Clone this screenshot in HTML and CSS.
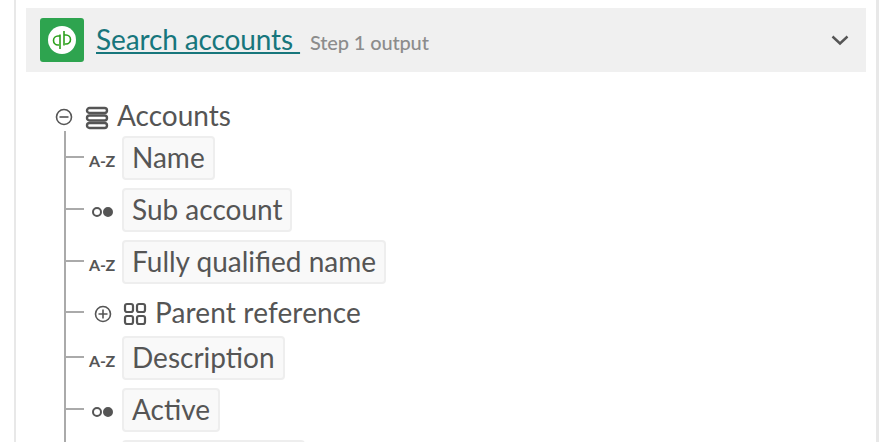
FILE: index.html
```html
<!DOCTYPE html>
<html lang="en">

<head>
    <meta charset="UTF-8">
    <meta name="viewport" content="width=device-width, initial-scale=1.0">
    <title>Search accounts</title>
    <link rel="stylesheet" href="styles.css">
</head>

<body>
    <div class="panel">
        <div class="step-header">
            <div class="app-icon">
                <svg width="30" height="30" viewBox="0 0 30 30">
                    <circle cx="15" cy="15" r="14" fill="#fff" />
                    <path d="M13 9.5V24M13 11H11a4.5 4.5 0 0 0 0 9h1M17 6v14.5M17 10h2a4.5 4.5 0 0 1 0 9h-1" fill="none" stroke="#2ca01c" stroke-width="1.6" />
                </svg>
            </div>
            <a class="step-title" href="#">Search accounts&nbsp;</a>
            <span class="step-sub">Step 1 output</span>
            <svg class="chevron" width="18" height="12" viewBox="0 0 18 12">
                <path d="M1.5 2.5L9 9.5L16.5 2.5" fill="none" stroke="#555" stroke-width="2.4" />
            </svg>
        </div>

        <div class="tree-root">
            <svg class="toggle" width="18" height="18" viewBox="0 0 18 18">
                <circle cx="9" cy="9" r="7.5" fill="none" stroke="#555" stroke-width="1.6" />
                <path d="M4.5 9h9" stroke="#555" stroke-width="1.6" />
            </svg>
            <svg class="list-icon" width="24" height="24" viewBox="0 0 24 24">
                <g fill="none" stroke="#555" stroke-width="2.4">
                    <rect x="2" y="2" width="20" height="5" rx="2.5" />
                    <rect x="2" y="9.5" width="20" height="5" rx="2.5" />
                    <rect x="2" y="17" width="20" height="5" rx="2.5" />
                </g>
            </svg>
            <span class="root-label">Accounts</span>
        </div>

        <ul class="tree">
            <li>
                <span class="type-az">A-Z</span>
                <span class="chip">Name</span>
            </li>
            <li>
                <span class="type-bool"><i class="dot-open"></i><i class="dot-full"></i></span>
                <span class="chip">Sub account</span>
            </li>
            <li>
                <span class="type-az">A-Z</span>
                <span class="chip">Fully qualified name</span>
            </li>
            <li class="group">
                <svg class="toggle-small" width="18" height="18" viewBox="0 0 18 18">
                    <circle cx="9" cy="9" r="7.5" fill="none" stroke="#555" stroke-width="1.6" />
                    <path d="M4.5 9h9M9 4.5v9" stroke="#555" stroke-width="1.6" />
                </svg>
                <svg class="grid-icon" width="24" height="24" viewBox="0 0 24 24">
                    <g fill="none" stroke="#555" stroke-width="2.2">
                        <rect x="2" y="2" width="8" height="8" rx="2" />
                        <rect x="14" y="2" width="8" height="8" rx="2" />
                        <rect x="2" y="14" width="8" height="8" rx="2" />
                        <rect x="14" y="14" width="8" height="8" rx="2" />
                    </g>
                </svg>
                <span class="group-label">Parent reference</span>
            </li>
            <li>
                <span class="type-az">A-Z</span>
                <span class="chip">Description</span>
            </li>
            <li>
                <span class="type-bool"><i class="dot-open"></i><i class="dot-full"></i></span>
                <span class="chip">Active</span>
            </li>
            <li>
                <span class="type-az"></span>
                <span class="chip chip-next"></span>
            </li>
        </ul>
    </div>
</body>

</html>
```

FILE: styles.css
```css
html,
body {
    height: 100%;
    margin: 0;
    overflow: hidden;
}

body {
    font-family: Lato, "Open Sans", sans-serif;
    background-color: #fff;
    color: #555;
}

.panel {
    box-sizing: border-box;
    width: 865px;
    height: 100%;
    margin-left: 14px;
    padding: 8px 10px 0;
    overflow: hidden;
    border-left: 2px solid #e8e8e8;
    border-right: 3px solid #e8e8e8;
}

.step-header {
    display: flex;
    align-items: center;
    height: 64px;
    padding: 0 14px;
    background-color: #f0f0f0;
}

.app-icon {
    display: flex;
    align-items: center;
    justify-content: center;
    width: 44px;
    height: 44px;
    margin-right: 12px;
    background-color: #2ea44f;
    border-radius: 3px;
}

.step-title {
    margin-top: -2px;
    color: #17767c;
    font-size: 28px;
    letter-spacing: -0.12px;
}

.step-sub {
    margin-left: 10px;
    margin-top: 4px;
    color: #8c8c8c;
    font-size: 20px;
    font-weight: 500;
    letter-spacing: -0.15px;
}

.chevron {
    margin-left: auto;
    margin-right: 3px;
}

.tree-root {
    display: flex;
    align-items: center;
    height: 44px;
    margin-top: 20px;
    margin-left: 29px;
    font-size: 28px;
}

.toggle {
    margin-top: 6px;
    margin-right: 12px;
}

.list-icon {
    margin-top: 8px;
    margin-right: 8px;
}

.root-label {
    margin-top: 2px;
}

.tree {
    list-style: none;
    margin: -5px 0 0 38px;
    padding: 5px 0 0;
    border-left: 2px solid #aaa;
}

.tree li {
    display: flex;
    align-items: center;
    height: 44px;
    margin-bottom: 8px;
    font-size: 28px;
}

.tree li::before {
    content: "";
    flex: none;
    width: 18px;
    height: 2px;
    margin-top: -3px;
    background-color: #aaa;
}

.tree li.group {
    margin-bottom: 0;
}

.tree li.group::before {
    margin-top: -5px;
}

.type-az,
.type-bool {
    display: flex;
    align-items: center;
    justify-content: center;
    flex: none;
    width: 36px;
    padding-right: 2px;
    margin-top: 4px;
    font-weight: 700;
}

.type-az {
    font-size: 16px;
    letter-spacing: -0.3px;
}

.type-bool {
    gap: 1px;
}

.dot-open,
.dot-full {
    box-sizing: border-box;
    width: 10px;
    height: 10px;
    border: 2px solid #555;
    border-radius: 50%;
}

.dot-full {
    background-color: #555;
}

.chip {
    box-sizing: border-box;
    height: 44px;
    padding: 0 8px;
    line-height: 38px;
    background-color: #f9f9f9;
    border: 2px solid #eee;
    border-radius: 4px;
}

.chip-next {
    width: 183px;
}

.toggle-small {
    margin-left: 10px;
    margin-right: 11px;
}

.grid-icon {
    margin-right: 8px;
}

.group-label {
    margin-top: -4px;
    letter-spacing: 0.15px;
}
```
